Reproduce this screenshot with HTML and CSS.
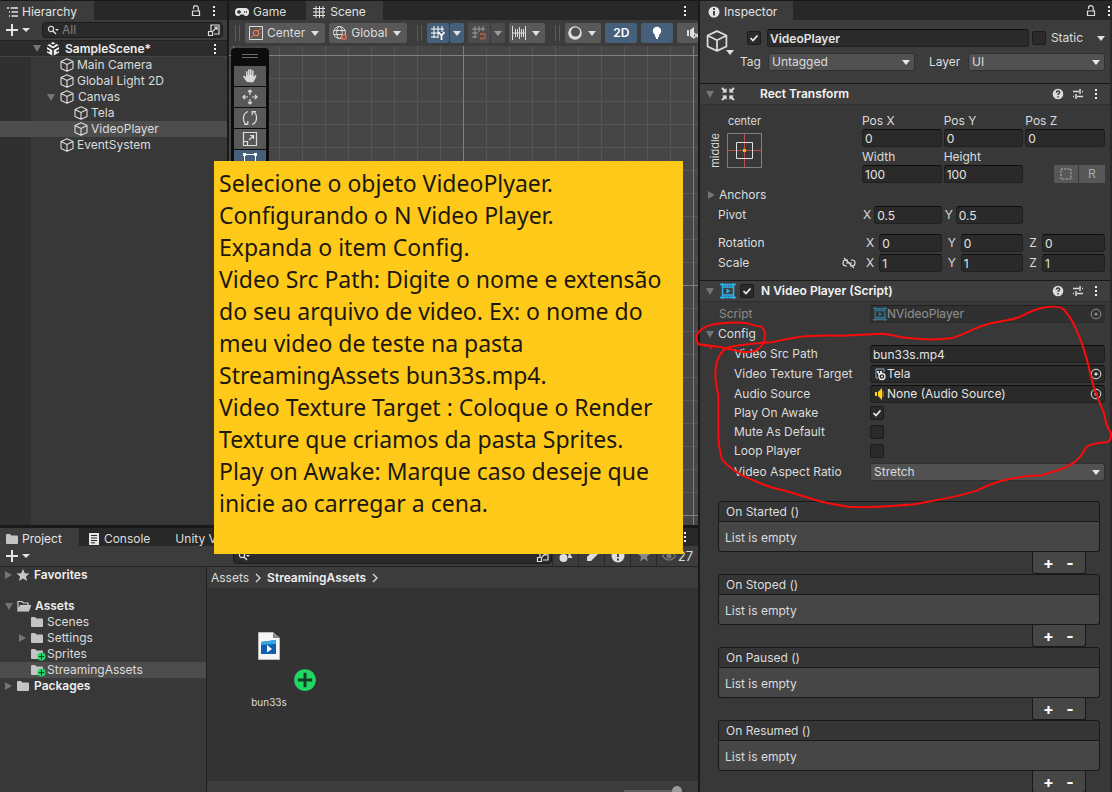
FILE: index.html
```html
<!DOCTYPE html>
<html lang="pt-BR">
<head>
  <meta charset="UTF-8" />
  <meta name="viewport" content="width=device-width, initial-scale=1.0" />
  <title>SampleScene - Editor</title>
  <link rel="stylesheet" href="styles.css">
</head>
<body>
  <svg class="defs" aria-hidden="true">
    <symbol id="cube" viewBox="0 0 14 14"><path d="M7 .7L13 3.500V10.500L7 13.300L1 10.500V3.500ZM1 3.500L7 6.500L13 3.500M7 6.500V13" fill="none" stroke="currentColor" stroke-width="1.100" stroke-linejoin="round"/></symbol>
    <symbol id="kebab" viewBox="0 0 4 12"><path d="M1 1h2v2H1zM1 5h2v2H1zM1 9h2v2H1z" fill="currentColor"/></symbol>
    <symbol id="lock" viewBox="0 0 10 12"><path d="M1.500 6h7v4.500h-7zM2.500 4V3a2.300 2.300 0 0 1 4.800 0v3" fill="none" stroke="currentColor" stroke-width="1.200"/></symbol>
    <symbol id="folder" viewBox="0 0 14 12"><path d="M1 2q0-1 1-1h3l1.500 1.500H12q1 0 1 1V10q0 1-1 1H2q-1 0-1-1z" fill="#c4c4c4"/></symbol>
    <symbol id="folder-open" viewBox="0 0 14 12"><path d="M1 11V1.500h4L6.500 3H11v2M1 11L3.500 5.500H13.500L11.500 11Z" fill="none" stroke="#d0d0d0" stroke-width="1.200"/><path d="M3.500 6h9.500L11 11H1.500z" fill="#c4c4c4"/></symbol>
    <symbol id="added" viewBox="0 0 10 10"><circle cx="5" cy="5" r="4.500" fill="#21d865"/><path d="M5 2v6M2 5h6" stroke="#163d22" stroke-width="1.200"/></symbol>
    <symbol id="search" viewBox="0 0 12 10"><circle cx="4" cy="4" r="2.600" fill="none" stroke="currentColor" stroke-width="1.200"/><path d="M6 6l3 3" stroke="currentColor" stroke-width="1.400"/><path d="M8 4h4l-2 2z" fill="currentColor"/></symbol>
    <symbol id="popout" viewBox="0 0 14 14"><path d="M4 8V2h8v9H7M1.500 8.500h4v4h-4zM6 8l4-4M7 4h3v3" fill="none" stroke="currentColor" stroke-width="1.200"/></symbol>
    <symbol id="help" viewBox="0 0 12 12"><circle cx="6" cy="6" r="5.300" fill="currentColor"/><path d="M4.300 4.800Q4.500 3 6 3T7.700 4.700Q7.600 5.500 6 6.300V7M6 8v1.400" fill="none" stroke="#333" stroke-width="1.300"/></symbol>
    <symbol id="preset" viewBox="0 0 12 12"><path d="M1 3.500h6M10 3.500h1M8 1v5M1 8.500h1M5 8.500h6M4 6v5" fill="none" stroke="currentColor" stroke-width="1.500"/></symbol>
    <symbol id="film" viewBox="0 0 16 16"><path d="M2.500 0v16M13.500 0v16M0 1.500h16M0 14.500h16M2.500 4h11v8h-11z" fill="none" stroke="#2ab4f0" stroke-width="1.500"/><path d="M4 2.700h9M4 13.300h9" stroke="#2ab4f0" stroke-dasharray="1.500 1"/><path d="M6.500 5.500L10.500 8L6.500 10.500z" fill="#2ab4f0"/></symbol>
    <symbol id="picker" viewBox="0 0 12 12"><circle cx="6" cy="6" r="4.800" fill="none" stroke="currentColor"/><circle cx="6" cy="6" r="1.600" fill="currentColor"/></symbol>
  </svg>

  <div class="editor">
    <div class="workspace">
      <div class="upper">
        <section class="panel hierarchy">
          <div class="tabbar">
            <button class="tab active"><svg class="i12" viewBox="0 0 12 12"><path d="M1 2h2M4.500 2H12M3 6h1M5.500 6H12M3 10h1M5.500 10H12" stroke="currentColor" stroke-width="1.300"/></svg>Hierarchy</button>
            <span class="grow"></span>
            <svg class="lock"><use href="#lock"/></svg>
            <svg class="kebab"><use href="#kebab"/></svg>
          </div>
          <div class="toolbar">
            <button class="add" aria-label="Create"><svg viewBox="0 0 26 12"><path d="M6 0v12M0 6h12" stroke="currentColor" stroke-width="2"/><path d="M16 4h8l-4 4z" fill="currentColor"/></svg></button>
            <label class="search">
              <svg class="glass"><use href="#search"/></svg>
              <input type="text" placeholder="All" aria-label="Search hierarchy">
              <svg class="popout"><use href="#popout"/></svg>
            </label>
          </div>
          <ul class="tree objects">
            <li class="scene"><i class="fold open"></i><svg class="i14" viewBox="0 0 14 14"><path d="M7 0L13 3.500V10.500L7 14L1 10.500V3.500z" fill="#f0f0f0"/><path d="M7 14V7.500L1 4M7 7.500L13 4M4 1.500L7 3.500L10 1.500M1 8l2.500 1.500M13 8l-2.500 1.500" stroke="#242424" stroke-width="1.500" fill="none"/></svg><b>SampleScene*</b><svg class="kebab"><use href="#kebab"/></svg></li>
            <li class="d1"><svg class="i14"><use href="#cube"/></svg>Main Camera</li>
            <li class="d1"><svg class="i14"><use href="#cube"/></svg>Global Light 2D</li>
            <li class="d1 folded"><i class="fold open"></i><svg class="i14"><use href="#cube"/></svg>Canvas</li>
            <li class="d2"><svg class="i14"><use href="#cube"/></svg>Tela</li>
            <li class="d2 selected"><svg class="i14"><use href="#cube"/></svg>VideoPlayer</li>
            <li class="d1"><svg class="i14"><use href="#cube"/></svg>EventSystem</li>
          </ul>
        </section>

        <section class="panel sceneview">
          <div class="tabbar">
            <button class="tab"><svg class="i14" viewBox="0 0 14 12"><path d="M4 2h6q4 0 4 4t-3 4q-1.500 0-2.500-1.500h-3Q4.500 10 3 10Q0 10 0 6t4-4z" fill="#e4e4e4"/><path d="M4 4v4M2 6h4M9 6h1M11 6h1" stroke="#282828" stroke-width="1.300"/></svg>Game</button>
            <button class="tab active wide"><svg class="i12" viewBox="0 0 12 12"><path d="M3 0v12M6.500 0v12M10 0v12M0 2.500h12M0 6h12M0 9.500h12" stroke="currentColor"/></svg>Scene</button>
            <span class="grow"></span>
            <svg class="kebab"><use href="#kebab"/></svg>
          </div>
          <div class="toolbar tools">
            <span class="grip"></span>
            <button class="tool center"><svg class="i14" viewBox="0 0 14 14"><path d="M.5.5h13v13H.5z" fill="none" stroke="currentColor"/><circle cx="7" cy="7" r="2.700" fill="none" stroke="#f0764e" stroke-width="1.300"/><path d="M9 5l3-3M5 9l-3 3" stroke="#f0764e"/></svg>Center<i class="caret"></i></button>
            <button class="tool"><svg class="i14" viewBox="0 0 14 14"><g fill="none" stroke="currentColor"><circle cx="6.500" cy="6.500" r="6"/><ellipse cx="6.500" cy="6.500" rx="2.800" ry="6"/><path d="M1 4.500h11M1 8.500h8"/></g><circle cx="11" cy="11" r="2.200" fill="#585858" stroke="#f0764e" stroke-width="1.300"/></svg>Global<i class="caret"></i></button>
            <span class="grip mid"></span>
            <div class="pair">
              <button class="tool on" aria-label="Grid"><svg class="i14" viewBox="0 0 14 14"><path d="M3 0v12M7 0v12M11 0v6M0 3h13M0 7h8M0 11h7" stroke="currentColor"/><path d="M7.500 6l3 3.500L13.500 6M10.500 9v5" fill="none" stroke="#fff" stroke-width="1.700"/></svg></button>
              <button class="tool on drop" aria-label="Grid options"><i class="caret"></i></button>
            </div>
            <div class="pair off">
              <button class="tool" aria-label="Snap"><svg class="i14" viewBox="0 0 14 14"><path d="M3 0v12M7 0v6M11 0v5M0 3h13M0 7h6M0 11h5" stroke="currentColor"/><path d="M8 8h3q2.500 0 2.500 2.300T11 12.500H8" fill="none" stroke="#f0764e" stroke-width="1.800"/></svg></button>
              <button class="tool drop" aria-label="Snap options"><i class="caret"></i></button>
            </div>
            <button class="tool ruler" aria-label="Increment"><svg class="i14" viewBox="0 0 14 14"><path d="M.5 0v14M3.500 3v8M5.500 3v8M7.500 1v12M9.500 3v8M11.500 3v8M13.500 0v14M0 7h14" stroke="currentColor"/></svg><i class="caret"></i></button>
            <span class="grip mid"></span>
            <button class="tool ruler" aria-label="Draw mode"><svg class="i14" viewBox="0 0 14 14"><circle cx="7" cy="7" r="6.800" fill="#dcdcdc"/><circle cx="7.500" cy="6" r="4.500" fill="#505050"/></svg><i class="caret"></i></button>
            <button class="tool on sq">2D</button>
            <button class="tool on sq" aria-label="Lighting"><svg class="i14" viewBox="0 0 14 14"><circle cx="7" cy="5" r="4.200" fill="#fff"/><path d="M5 8h4v3H5zM6 11h2v2H6z" fill="#fff"/></svg></button>
            <button class="tool sq" aria-label="Audio"><svg class="i14" viewBox="0 0 14 14"><path d="M1 4h2v6H1zM4 4l4-3v12L4 10z" fill="#ddd"/><path d="M8 7l5 5M13 7l-5 5" stroke="#ddd" stroke-width="1.300"/></svg></button>
          </div>
          <div class="canvas">
            <div class="palette">
              <span class="handle"></span>
              <button aria-label="Hand"><svg viewBox="0 0 16 16"><path d="M5 14Q2.500 11 1 8.500q.3-1.500 3 .5V3.500q.8-1 1.500 0V7h.5V1.700q.8-1 1.600 0V7H8V1.500q.8-1 1.600 0V7h.5V2.700q.8-.9 1.500 0V9l1.700-2q1.200 0 1.200.5Q13 12 11 14.500z" fill="#d8d8d8"/></svg></button>
              <button aria-label="Move"><svg viewBox="0 0 16 16"><path d="M8 1v5M8 10v5M1 8h5M10 8h5M6 3l2-2 2 2M6 13l2 2 2-2M3 6L1 8l2 2M13 6l2 2-2 2" fill="none" stroke="currentColor" stroke-width="1.200"/></svg></button>
              <button aria-label="Rotate"><svg viewBox="0 0 16 16"><path d="M6 1.500Q1 3.500 1.500 9t4 5M5.800 15V11M6 14.500H2M10 14.500q5-2 4.500-7.500t-4-5M10.200 1V5M10 1.500h4" fill="none" stroke="currentColor" stroke-width="1.200"/></svg></button>
              <button aria-label="Scale"><svg viewBox="0 0 16 16"><path d="M1.500 1.500h13v13h-13zM1.500 10.500h4v4M7 9l4.500-4.500M8 4.500h3.500V8" fill="none" stroke="currentColor" stroke-width="1.200"/></svg></button>
              <button class="on" aria-label="Rect"><svg viewBox="0 0 16 16"><path d="M2.500 2.500h11v11h-11z" fill="none" stroke="#fff"/><path d="M1 1h3v3H1zM12 1h3v3h-3zM1 12h3v3H1zM12 12h3v3h-3z" fill="#fff"/></svg></button>
            </div>
          </div>
        </section>
      </div>

      <section class="panel project">
        <div class="tabbar">
          <button class="tab active"><svg class="f14"><use href="#folder"/></svg>Project</button>
          <button class="tab wide"><svg class="i12" viewBox="0 0 12 12"><path d="M1 0h10v12H1z" fill="#e4e4e4"/><path d="M3 2.500h6M3 5h6M3 7.500h6M3 9.800h4" stroke="#282828"/></svg>Console</button>
          <button class="tab plain">Unity Version Control</button>
          <span class="grow"></span>
          <svg class="kebab"><use href="#kebab"/></svg>
        </div>
        <div class="toolbar">
          <button class="add" aria-label="Create asset"><svg viewBox="0 0 26 12"><path d="M6 0v12M0 6h12" stroke="currentColor" stroke-width="2"/><path d="M16 4h8l-4 4z" fill="currentColor"/></svg></button>
          <label class="search">
            <svg class="glass"><use href="#search"/></svg>
            <input type="text" aria-label="Search project">
            <svg class="popout"><use href="#popout"/></svg>
          </label>
          <div class="filters">
            <button aria-label="Filter by type"><svg class="i14" viewBox="0 0 14 14"><circle cx="4.500" cy="9" r="4" fill="#ddd"/><path d="M10 3l3.500 6H9z" fill="#ddd"/></svg></button>
            <button aria-label="Filter by label"><svg class="i14" viewBox="0 0 14 14"><path d="M2 8L9 1l4 4-7 7-4 0z" fill="#ddd"/></svg></button>
            <button aria-label="Filter by log"><svg class="i14" viewBox="0 0 14 14"><circle cx="7" cy="7" r="6.500" fill="#ddd"/><path d="M7 3v5M7 9.500v2" stroke="#333" stroke-width="1.800"/></svg></button>
            <button aria-label="Favorite"><svg class="i14" viewBox="0 0 14 14"><path d="M7 1l1.800 4H13L9.800 7.800 11 12.500 7 9.800 3 12.500 4.200 7.800 1 5h4.200z" fill="#888"/></svg></button>
            <button class="hidden-count"><svg class="i14" viewBox="0 0 14 14"><path d="M.5 7Q7-1 13.500 7 7 15 .5 7z" fill="none" stroke="#777" stroke-width="1.200"/><circle cx="7" cy="7" r="2.500" fill="#777"/></svg>27</button>
          </div>
        </div>
        <div class="browser">
          <ul class="tree folders">
            <li class="root"><i class="fold"></i><svg class="i14" viewBox="0 0 14 14"><path d="M7 1l1.800 4.200 4.700.3-3.600 3 1.200 4.600L7 10.600l-4.100 2.500 1.200-4.600-3.600-3 4.700-.3z" fill="#c8c8c8"/></svg><b>Favorites</b></li>
            <li class="root gap"><i class="fold open"></i><svg class="f14"><use href="#folder-open"/></svg><b>Assets</b></li>
            <li class="sub"><svg class="f14"><use href="#folder"/></svg>Scenes</li>
            <li class="sub folded"><i class="fold"></i><svg class="f14"><use href="#folder"/></svg>Settings</li>
            <li class="sub"><span class="badged"><svg class="f14"><use href="#folder"/></svg><svg class="badge"><use href="#added"/></svg></span>Sprites</li>
            <li class="sub selected"><span class="badged"><svg class="f14"><use href="#folder"/></svg><svg class="badge"><use href="#added"/></svg></span>StreamingAssets</li>
            <li class="root"><i class="fold"></i><svg class="f14"><use href="#folder"/></svg><b>Packages</b></li>
          </ul>
          <div class="contents">
            <nav class="crumbs"><a href="#">Assets</a><svg viewBox="0 0 6 10"><path d="M1 1l4 4-4 4" fill="none" stroke="currentColor" stroke-width="1.300"/></svg><a href="#"><b>StreamingAssets</b></a><svg viewBox="0 0 6 10"><path d="M1 1l4 4-4 4" fill="none" stroke="currentColor" stroke-width="1.300"/></svg></nav>
            <div class="files">
              <figure class="file">
                <svg class="doc" viewBox="0 0 22 28"><path d="M.5.5H15L21.500 6V27.500H.5z" fill="#f6f6f6" stroke="#bbb"/><path d="M15 .5V6h6.500z" fill="#888"/><path d="M3 10l7-1 8-1v14H3z" fill="#0f5fae"/><path d="M3 10l15-2v4L3 13z" fill="#35a7e0"/><path d="M9 13l5 4-5 3.500z" fill="#fff"/></svg>
                <svg class="plus"><use href="#added"/></svg>
                <figcaption>bun33s</figcaption>
              </figure>
            </div>
            <div class="status"><input type="range" min="0" max="100" value="100" aria-label="Icon size"></div>
          </div>
        </div>
      </section>

      <div class="note">
        <p>Selecione o objeto VideoPlyaer.<br>Configurando o N Video Player.<br>Expanda o item Config.<br>Video Src Path: Digite o nome e extensão<br>do seu arquivo de video. Ex: o nome do<br>meu video de teste na pasta<br>StreamingAssets bun33s.mp4.<br>Video Texture Target : Coloque o Render<br>Texture que criamos da pasta Sprites.<br>Play on Awake: Marque caso deseje que<br>inicie ao carregar a cena.</p>
      </div>
    </div>

    <section class="panel inspector">
      <div class="tabbar">
        <button class="tab active"><svg class="i12" viewBox="0 0 12 12"><circle cx="6" cy="6" r="5.500" fill="#e4e4e4"/><path d="M6 2v2M6 5v4.500" stroke="#333" stroke-width="1.800"/></svg>Inspector</button>
        <span class="grow"></span>
        <svg class="lock"><use href="#lock"/></svg>
        <svg class="kebab edge"><use href="#kebab"/></svg>
      </div>
      <div class="scroll">
        <header class="object">
          <div class="objicon"><svg class="big"><use href="#cube"/></svg><i class="caret"></i></div>
          <div class="objfields">
            <div class="line">
              <input type="checkbox" aria-label="Active" checked>
              <input class="field name" type="text" value="VideoPlayer" aria-label="Name">
              <input type="checkbox" id="static"><label for="static">Static</label>
              <i class="caret"></i>
            </div>
            <div class="line tags">
              <label for="tag">Tag</label>
              <span class="dropdown"><select id="tag"><option>Untagged</option></select></span>
              <label class="layer" for="layer">Layer</label>
              <span class="dropdown"><select id="layer"><option>UI</option></select></span>
            </div>
          </div>
        </header>

        <div class="component">
          <i class="fold open"></i>
          <svg class="i16" viewBox="0 0 16 16"><path d="M2 2l4 4M14 2l-4 4M2 14l4-4M14 14l-4-4" stroke="currentColor" stroke-width="2"/><path d="M6.500 2v4.500H2zM9.500 2v4.500H14zM6.500 14V9.500H2zM9.500 14V9.500H14z" fill="currentColor"/></svg>
          <h2 class="indent">Rect Transform</h2>
          <svg class="i12"><use href="#help"/></svg><svg class="i12"><use href="#preset"/></svg><svg class="kebab"><use href="#kebab"/></svg>
        </div>
        <div class="rect">
          <div class="position">
            <div class="anchor">
              <span class="center-label">center</span>
              <span class="middle-label">middle</span>
              <svg viewBox="0 0 35 35"><path d="M.5.5h34v34H.5z" fill="none" stroke="#808080"/><path d="M17.500 1v33M1 17.500h33" stroke="#b8504e"/><path d="M9.500 9.500h16v16h-16z" fill="none" stroke="#e0e0e0"/><path d="M16 16h3v3h-3z" fill="#ffb61a"/></svg>
            </div>
            <label>Pos X<input class="field" type="text" value="0"></label>
            <label>Pos Y<input class="field" type="text" value="0"></label>
            <label>Pos Z<input class="field" type="text" value="0"></label>
            <label>Width<input class="field" type="text" value="100"></label>
            <label>Height<input class="field" type="text" value="100"></label>
            <div class="modes"><button aria-label="Blueprint mode"><svg class="i12" viewBox="0 0 12 12"><path d="M1 1h10v10H1z" fill="none" stroke="#b8b8b8" stroke-dasharray="2 1.300"/></svg></button><button>R</button></div>
          </div>
          <div class="row anchors"><i class="fold"></i>Anchors</div>
          <div class="row axes tight"><span>Pivot</span>
            <label>X<input class="field" type="text" value="0.5"></label>
            <label>Y<input class="field" type="text" value="0.5"></label>
          </div>
          <div class="row axes gap"><span>Rotation</span>
            <label>X<input class="field" type="text" value="0"></label>
            <label>Y<input class="field" type="text" value="0"></label>
            <label>Z<input class="field" type="text" value="0"></label>
          </div>
          <div class="row axes"><span class="link">Scale<svg class="i14" viewBox="0 0 14 12"><path d="M6 3H4Q1 3 1 6t3 3h1M8 9h2q3 0 3-3t-3-3H9M4 6h6M2 1l10 10" fill="none" stroke="currentColor" stroke-width="1.200"/></svg></span>
            <label>X<input class="field" type="text" value="1"></label>
            <label>Y<input class="field" type="text" value="1"></label>
            <label>Z<input class="field" type="text" value="1"></label>
          </div>
        </div>

        <div class="component">
          <i class="fold open"></i>
          <svg class="i16"><use href="#film"/></svg>
          <input type="checkbox" aria-label="Enabled" checked>
          <h2>N Video Player (Script)</h2>
          <svg class="i12"><use href="#help"/></svg><svg class="i12"><use href="#preset"/></svg><svg class="kebab"><use href="#kebab"/></svg>
        </div>
        <div class="script">
          <div class="row prop disabled"><span>Script</span><div class="field object-field"><svg class="i14"><use href="#film"/></svg><span>NVideoPlayer</span><svg class="picker"><use href="#picker"/></svg></div></div>
          <div class="row config"><i class="fold open"></i>Config</div>
          <div class="row prop in"><label for="src">Video Src Path</label><input class="field" id="src" type="text" value="bun33s.mp4"></div>
          <div class="row prop in"><span>Video Texture Target</span><div class="field object-field"><svg class="i14" viewBox="0 0 14 14"><path d="M3 2h8v3M3 2v9h2" fill="none" stroke="#8ab" /><path d="M4 4h2v2H4zM7 4h2v2H7zM5 6h2v2H5z" fill="#ddd"/><circle cx="9" cy="9.500" r="3" fill="none" stroke="#eee" stroke-width="1.300"/><circle cx="9" cy="9.500" r="1" fill="#eee"/></svg><span>Tela</span><svg class="picker"><use href="#picker"/></svg></div></div>
          <div class="row prop in"><span>Audio Source</span><div class="field object-field"><svg class="i14" viewBox="0 0 14 14"><path d="M2 5h2v4H2zM5 5l4-4v12L5 9z" fill="#ffd21e"/><path d="M10 4v6" stroke="#e08a10"/></svg><span>None (Audio Source)</span><svg class="picker"><use href="#picker"/></svg></div></div>
          <div class="row prop in short"><label for="awake">Play On Awake</label><input type="checkbox" id="awake" checked></div>
          <div class="row prop in short"><label for="mute">Mute As Default</label><input type="checkbox" id="mute"></div>
          <div class="row prop in short"><label for="loop">Loop Player</label><input type="checkbox" id="loop"></div>
          <div class="row prop in ratio"><label for="ratio">Video Aspect Ratio</label><span class="dropdown"><select id="ratio"><option>Stretch</option></select></span></div>
        </div>

        <div class="events">
          <div class="event"><h3>On Started ()</h3><p>List is empty</p><div class="ops"><button>+</button><button>-</button></div></div>
          <div class="event"><h3>On Stoped ()</h3><p>List is empty</p><div class="ops"><button>+</button><button>-</button></div></div>
          <div class="event"><h3>On Paused ()</h3><p>List is empty</p><div class="ops"><button>+</button><button>-</button></div></div>
          <div class="event"><h3>On Resumed ()</h3><p>List is empty</p><div class="ops"><button>+</button><button>-</button></div></div>
        </div>
      </div>
      <!-- hand-drawn marks around the Config group -->
      <svg class="marker" viewBox="0 0 1251 720" fill="none" stroke="#fb0b0b" stroke-width="6" stroke-linejoin="round" stroke-linecap="round">
        <path d="M50 220L47 214L10 208Q-2 185 10 172Q28 152 62 147Q110 139 158 145Q178 153 200 155Q213 170 210 187Q206 215 180 228Q150 234 130 228Q100 222 75 216L12 208"/>
        <path d="M70 360Q54 295 66 260Q78 222 105 216Q160 205 230 202Q290 188 330 184Q380 181 440 182Q520 178 560 176Q590 178 620 187Q700 198 770 190L808 176Q850 154 890 144Q940 136 972 127Q1020 102 1050 97Q1090 91 1105 102Q1130 130 1142 160Q1165 210 1180 270Q1192 330 1208 368L1226 412Q1232 440 1235 450L1249 477Q1248 496 1236 502Q1180 505 1170 522Q1158 547 1138 562Q1115 577 1090 585L1040 601Q980 603 920 617Q880 628 845 647Q800 662 690 682Q655 690 600 692Q520 699 460 695Q420 689 380 680L265 646Q230 640 180 618Q140 602 120 588Q85 562 80 550Q69 510 70 470Z"/>
      </svg>
    </section>
  </div>
</body>
</html>
```

FILE: styles.css
```css
* { box-sizing: border-box; }
body {
  margin: 0;
  background: #191919;
  color: #dcdcdc;
  font: 12px/16px Inter, "Liberation Sans", sans-serif;
}
button, input, select { font: inherit; color: inherit; margin: 0; padding: 0; border: 0; }
button { background: none; }
ul, p, h2, h3, figure { margin: 0; padding: 0; }
ul { list-style: none; }
svg { flex: none; display: block; }
a { color: inherit; text-decoration: none; }
.defs { position: absolute; width: 0; height: 0; }
.grow { flex: 1; }
.i12 { width: 12px; height: 12px; }
.i14 { width: 14px; height: 14px; }
.i16 { width: 16px; height: 16px; }
.f14 { width: 14px; height: 12px; }
.lock { width: 10px; height: 12px; }
.kebab { width: 4px; height: 12px; color: #eee; }
.popout { width: 14px; height: 14px; }

.editor {
  display: grid;
  grid-template-columns: minmax(0, 1fr) 412px;
  gap: 2px;
  height: 100vh;
  overflow: hidden;
}
.workspace {
  position: relative;
  display: grid;
  grid-template-rows: minmax(0, 1fr) 265px;
  gap: 2px;
  min-height: 0;
}
.upper {
  display: grid;
  grid-template-columns: 227px minmax(0, 1fr);
  gap: 2px;
  min-height: 0;
}
.panel { display: flex; flex-direction: column; background: #383838; min-width: 0; min-height: 0; overflow: hidden; }

/* tabs and toolbars */
.tabbar { display: flex; align-items: center; flex: none; height: 20px; gap: 11px; padding-right: 11px; background: #282828; border-top: 1px solid #191919; }
.tab { display: flex; align-items: center; gap: 4px; height: 19px; padding: 3px 17px 0 6px; white-space: nowrap; }
.tab.active { background: #3c3c3c; color: #e4e4e4; }
.tabbar .tab + .tab { margin-left: -11px; }
.toolbar { display: flex; align-items: center; flex: none; height: 21px; background: #3c3c3c; border-bottom: 1px solid #232323; }
.add { width: 36px; padding-left: 6px; }
.add svg { width: 26px; height: 12px; color: #e4e4e4; }
.search { display: flex; align-items: center; flex: 1; min-width: 0; height: 16px; margin: 0 4px 0 6px; padding: 0 1px 0 4px; background: #2a2a2a; border: 1px solid #1c1c1c; border-radius: 4px; }
.search input { flex: 1; min-width: 0; padding-left: 3px; background: none; }
.search input::placeholder { color: #808080; }
.glass { width: 12px; height: 10px; }

/* trees */
.tree li { display: flex; align-items: center; gap: 3px; height: 16px; white-space: nowrap; }
.fold { flex: none; width: 0; height: 0; border: 4px solid transparent; border-left: 7px solid #747474; border-right: 0; }
.fold.open { border: 4px solid transparent; border-top: 7px solid #747474; border-bottom: 0; }
.tree .selected { background: #4d4d4d; }
.objects { flex: 1; background: linear-gradient(90deg, #303030 31px, #383838 31px); }
.objects .scene { gap: 5px; padding: 0 10px 0 33px; background: #2c2c2c; border-bottom: 1px solid #444; }
.objects .scene .kebab { margin-left: auto; }
.objects .d1 { padding-left: 60px; }
.objects .d2 { padding-left: 74px; }
.objects .folded { padding-left: 47px; gap: 4px; }
.objects .folded .i14 { margin-left: 1px; }
b { font-weight: 600; color: #eee; }

/* scene view */
.sceneview .tab { padding-right: 20px; }
.sceneview .tab.wide { padding: 3px 17px 0 7px; gap: 5px; }
.tools { height: 26px; gap: 4px; padding-left: 6px; border: 0; overflow: hidden; }
.grip { flex: none; width: 5px; height: 16px; margin-right: 1px; border: solid #5c5c5c; border-width: 0 1px; }
.grip.mid { margin: 0 1px 0 6px; }
.tool { display: flex; align-items: center; justify-content: center; flex: none; gap: 4px; height: 20px; padding: 0 4px; background: #585858; border-radius: 2px; }
.caret { flex: none; width: 0; height: 0; margin: 0 2px; border: 4px solid transparent; border-top: 5px solid #e0e0e0; border-bottom: 0; }
.pair { display: flex; gap: 1px; }
.on { background: #46607c; color: #fff; }
.off { opacity: .6; }
.drop { width: 14px; padding: 0; }
.tool .caret:only-child { margin: 0; }
.ruler { width: 36px; }
.sq { width: 32px; font-weight: 600; }
.canvas {
  flex: 1;
  padding: 2px;
  background-color: #464646;
  background-image:
    linear-gradient(90deg, #808080 1px, transparent 1px), linear-gradient(#808080 1px, transparent 1px),
    linear-gradient(90deg, #555 1px, transparent 1px), linear-gradient(#555 1px, transparent 1px);
  background-size: 230px 230px, 230px 230px, 23px 23px, 23px 23px;
  background-position: 4px 9px;
}
.palette { display: flex; flex-direction: column; align-items: center; gap: 1px; width: 38px; padding-bottom: 3px; background: #0c0c0c; border-radius: 4px; }
.handle { width: 16px; height: 4px; margin: 6px 0 7px; border: solid #6c6c6c; border-width: 1px 0; }
.palette button { display: flex; align-items: center; justify-content: center; width: 32px; height: 20px; background: #585858; }
.palette button.on { background: #46607c; }
.palette svg { width: 16px; height: 16px; }

/* project */
.project .tabbar { height: 19px; }
.project .tab { height: 18px; padding-right: 17px; }
.project .tab.active { padding-left: 5px; gap: 3px; }
.project .tab.wide { padding-left: 9px; }
.project .tab.plain { padding-left: 8px; }
.project .search { margin: 0 0 0 197px; }
.filters { display: flex; align-self: stretch; }
.filters button { display: flex; align-items: center; justify-content: center; width: 26px; border-left: 1px solid #282828; }
.filters .hidden-count { width: 42px; gap: 2px; font-size: 13px; }
.browser { display: grid; grid-template-columns: 206px minmax(0, 1fr); gap: 1px; flex: 1; min-height: 0; background: #202020; }
.folders { background: #383838; }
.folders .root { padding-left: 5px; gap: 4px; }
.folders .root .fold { width: 7px; }
.folders .root.gap { margin-top: 15px; }
.folders .sub { padding-left: 30px; }
.folders .sub.folded { padding-left: 19px; }
.folders .sub.folded .f14 { margin-left: 1px; }
.badged { position: relative; }
.badge { position: absolute; left: 7px; top: 4px; width: 9px; height: 9px; }
.contents { display: flex; flex-direction: column; min-width: 0; background: #333; }
.crumbs { display: flex; align-items: center; gap: 6px; height: 21px; padding-left: 4px; background: #3c3c3c; }
.crumbs svg { width: 6px; height: 10px; }
.files { flex: 1; padding: 44px 18px 0; }
.file { position: relative; display: flex; flex-direction: column; align-items: center; width: 88px; font-size: 10px; }
.doc { width: 22px; height: 28px; margin-bottom: 34px; }
.plus { position: absolute; left: 68px; top: 36px; width: 24px; height: 24px; }
.status { display: flex; justify-content: flex-end; height: 11px; padding-right: 16px; background: #3c3c3c; overflow: hidden; }
.status input { appearance: none; width: 58px; height: 20px; background: linear-gradient(#5e5e5e, #5e5e5e) center / 100% 2px no-repeat; }
.status input::-webkit-slider-thumb { appearance: none; width: 10px; height: 10px; background: #999; border-radius: 50%; }

.note {
  position: absolute;
  left: 214px;
  top: 161px;
  width: 469px;
  height: 393px;
  padding: 6px 0 0 5px;
  background: #ffc919;
  color: #1c1810;
  font: 23px/32px "Noto Sans", "Open Sans", sans-serif;
  white-space: nowrap;
}

/* inspector */
.inspector { position: relative; overflow: visible; }
.inspector .tabbar { padding-right: 1px; }
.inspector .tab { padding: 3px 16px 0 8px; }
.scroll { flex: 1; min-height: 0; overflow: hidden; border-right: 2px solid #2a2a2a; }
input[type="checkbox"] { appearance: none; flex: none; width: 14px; height: 14px; background: #2a2a2a; border: 1px solid #1c1c1c; border-radius: 2px; }
input[type="checkbox"]:checked {
  background: #2a2a2a url("data:image/svg+xml,%3Csvg xmlns='http://www.w3.org/2000/svg' viewBox='0 0 12 12'%3E%3Cpath d='M2.500 6l2.500 2.500 4.500-5' fill='none' stroke='%23eee' stroke-width='1.700'/%3E%3C/svg%3E") center / 12px 12px;
}
.field { min-width: 0; width: 100%; height: 18px; padding: 0 2px; background: #2a2a2a; border: 1px solid #202020; border-top-color: #0d0d0d; border-radius: 3px; color: #e4e4e4; }
.dropdown { position: relative; display: block; min-width: 0; height: 18px; }
.dropdown select { appearance: none; display: block; width: 100%; height: 18px; padding: 0 3px; background: #515151; border: 1px solid #303030; border-radius: 3px; }
.dropdown::after { content: ""; position: absolute; right: 5px; top: 7px; border: 4px solid transparent; border-top: 5px solid #e8e8e8; border-bottom: 0; pointer-events: none; }

.object { display: flex; height: 64px; padding: 9px 5px 0 6px; background: #3c3c3c; border-bottom: 1px solid #191919; }
.objicon { display: flex; width: 30px; }
.big { width: 22px; height: 24px; }
.objicon .caret { margin: 21px 0 0 -2px; }
.objfields { flex: 1; min-width: 0; }
.line { display: flex; align-items: center; gap: 6px; height: 18px; padding-left: 11px; }
.line .name { flex: 1; font-weight: 600; }
.line label { margin-left: -1px; }
.line .name + input { margin-left: -3px; }
.line .caret { margin: 0 0 0 8px; }
.tags { display: grid; grid-template-columns: 22px 148fr 43px 138fr; gap: 5px; margin-top: 6px; padding-left: 5px; }
.tags .layer { margin: 0; padding-left: 9px; }

.component { display: flex; align-items: center; gap: 6px; height: 21px; padding: 0 12px 0 6px; background: #3e3e3e; border-bottom: 1px solid #303030; }
.component h2 { flex: 1; font-size: 12px; font-weight: 600; line-height: 16px; color: #f4f4f4; }
.component .indent { margin-left: 18px; }
.component .i12 { margin-right: 2px; }
.component .kebab { margin-left: 2px; }
.component input { margin: 0 1px 0 -2px; }

.rect { padding: 8px 5px 7px 18px; border-bottom: 1px solid #191919; }
.position { display: grid; grid-template-columns: 142px repeat(3, minmax(0, 1fr)); gap: 0 2px; }
.position label { display: block; height: 36px; }
.position .field { display: block; }
.anchor { display: grid; grid-row: span 2; grid-template-columns: 12px 35px; grid-template-rows: 20px 35px; gap: 0 6px; margin-left: -9px; justify-content: start; }
.anchor svg { width: 35px; height: 35px; }
.center-label { grid-column: 2; justify-self: center; font-size: 11px; }
.middle-label { writing-mode: vertical-rl; transform: rotate(180deg); justify-self: center; align-self: center; font-size: 11px; line-height: 12px; }
.modes { display: flex; gap: 1px; justify-content: flex-end; align-items: flex-end; padding-bottom: 2px; }
.modes button { display: flex; align-items: center; justify-content: center; width: 26px; height: 18px; background: #575757; color: #aaa; }
.modes button:first-child { width: 24px; }
.row { display: flex; align-items: center; height: 20px; }
.anchors { gap: 4px; margin-left: -10px; }
.axes { display: grid; grid-template-columns: 142px repeat(3, minmax(0, 1fr)); gap: 0 2px; }
.axes label { display: flex; align-items: center; gap: 5px; padding-left: 4px; }
.axes .field { flex: 1; }
.axes.tight label { padding-left: 1px; gap: 3px; }
.axes.gap { margin-top: 8px; }
.axes .link { display: flex; justify-content: space-between; align-items: center; padding-right: 4px; }

.script { padding: 2px 5px 0 19px; }
.prop { display: grid; grid-template-columns: 151px minmax(0, 1fr); }
.prop.in { grid-template-columns: 136px minmax(0, 1fr); padding-left: 15px; }
.prop.short { height: 19px; padding-bottom: 2px; }
.prop.ratio { height: 21px; }
.config { gap: 4px; margin-left: -13px; }
.object-field { display: flex; align-items: center; gap: 0; }
.object-field span { flex: 1; }
.picker { width: 12px; height: 12px; }
.disabled { opacity: .5; }

.events { display: flex; flex-direction: column; padding: 19px 10px 0 18px; }
.event { display: flex; flex-direction: column; height: 73px; }
.event h3 { height: 21px; padding: 2px 7px; background: #353535; border: 1px solid #191919; border-radius: 3px 3px 0 0; font-size: 12px; font-weight: 400; }
.event p { height: 30px; padding: 8px 6px 0; background: #464646; border: 1px solid #191919; border-top: 0; border-radius: 0 0 3px 3px; }
.ops { display: flex; align-self: flex-end; gap: 12px; height: 22px; margin-right: 14px; padding: 0 10px; background: #464646; border: 1px solid #191919; border-top: 0; border-radius: 0 0 3px 3px; }
.ops button { width: 10px; color: #fff; font-weight: 700; font-size: 16px; line-height: 20px; }

.marker { position: absolute; left: -5px; top: 275px; width: 417px; height: 240px; overflow: visible; pointer-events: none; }
```
